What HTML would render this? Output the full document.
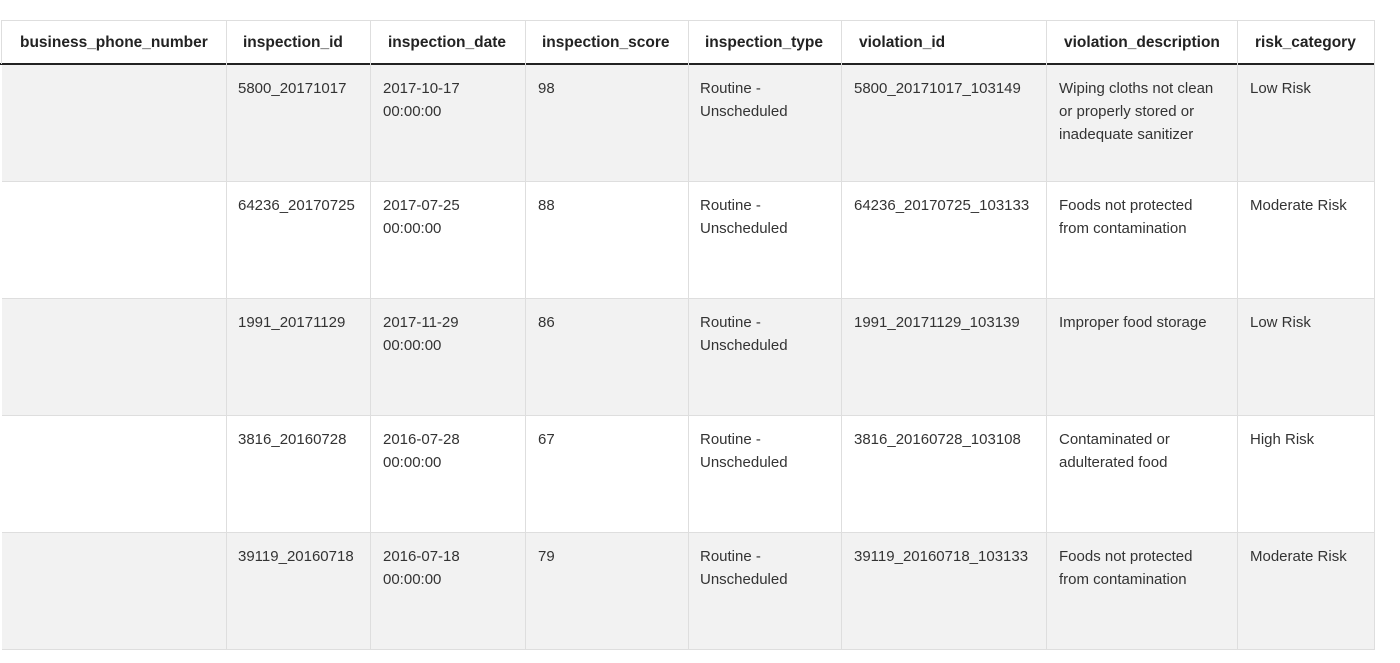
<!DOCTYPE html><html><head><style>
body{margin:0;width:1400px;height:663px;background:#fff;font-family:"Liberation Sans",Arial,sans-serif;overflow:hidden;position:relative}
.c{position:absolute;box-sizing:border-box;padding:12px 12px;font-size:15px;line-height:23px;color:#333;white-space:nowrap}
.h{font-weight:bold;color:#222;font-size:15.5px;padding-top:11px}
.vl{position:absolute;width:1px;background:#dedede}
.hl{position:absolute;height:1px;background:#dedede;left:2px;width:1373px}
.g{position:absolute;left:2px;width:1372px;height:117px;background:#f2f2f2}
</style></head><body>
<div class="hl" style="top:20px"></div>
<div class="g" style="top:65px"></div>
<div class="g" style="top:299px"></div>
<div class="g" style="top:533px"></div>
<div class="hl" style="top:181px"></div>
<div class="hl" style="top:298px"></div>
<div class="hl" style="top:415px"></div>
<div class="hl" style="top:532px"></div>
<div class="hl" style="top:649px"></div>
<div style="position:absolute;left:0;top:63px;width:1375px;height:2px;background:#222"></div>
<div class="vl" style="left:1px;top:20px;height:44px"></div>
<div class="vl" style="left:226px;top:20px;height:630px"></div>
<div class="vl" style="left:370px;top:20px;height:630px"></div>
<div class="vl" style="left:525px;top:20px;height:630px"></div>
<div class="vl" style="left:688px;top:20px;height:630px"></div>
<div class="vl" style="left:841px;top:20px;height:630px"></div>
<div class="vl" style="left:1046px;top:20px;height:630px"></div>
<div class="vl" style="left:1237px;top:20px;height:630px"></div>
<div class="vl" style="left:1374px;top:20px;height:630px"></div>

<div class="c h" style="left:8px;top:20px">business_phone_number</div>
<div class="c h" style="left:231px;top:20px">inspection_id</div>
<div class="c h" style="left:376px;top:20px">inspection_date</div>
<div class="c h" style="left:530px;top:20px">inspection_score</div>
<div class="c h" style="left:693px;top:20px">inspection_type</div>
<div class="c h" style="left:847px;top:20px">violation_id</div>
<div class="c h" style="left:1052px;top:20px">violation_description</div>
<div class="c h" style="left:1243px;top:20px">risk_category</div>

<div style="position:absolute;top:64px;left:0">
<div class="c" style="left:226px;top:1px">5800_20171017</div>
<div class="c" style="left:371px;top:1px">2017-10-17<br>00:00:00</div>
<div class="c" style="left:526px;top:1px">98</div>
<div class="c" style="left:688px;top:1px">Routine -<br>Unscheduled</div>
<div class="c" style="left:842px;top:1px">5800_20171017_103149</div>
<div class="c" style="left:1047px;top:1px">Wiping cloths not clean<br>or properly stored or<br>inadequate sanitizer</div>
<div class="c" style="left:1238px;top:1px">Low Risk</div>
</div>
<div style="position:absolute;top:181px;left:0">
<div class="c" style="left:226px;top:1px">64236_20170725</div>
<div class="c" style="left:371px;top:1px">2017-07-25<br>00:00:00</div>
<div class="c" style="left:526px;top:1px">88</div>
<div class="c" style="left:688px;top:1px">Routine -<br>Unscheduled</div>
<div class="c" style="left:842px;top:1px">64236_20170725_103133</div>
<div class="c" style="left:1047px;top:1px">Foods not protected<br>from contamination</div>
<div class="c" style="left:1238px;top:1px">Moderate Risk</div>
</div>
<div style="position:absolute;top:298px;left:0">
<div class="c" style="left:226px;top:1px">1991_20171129</div>
<div class="c" style="left:371px;top:1px">2017-11-29<br>00:00:00</div>
<div class="c" style="left:526px;top:1px">86</div>
<div class="c" style="left:688px;top:1px">Routine -<br>Unscheduled</div>
<div class="c" style="left:842px;top:1px">1991_20171129_103139</div>
<div class="c" style="left:1047px;top:1px">Improper food storage</div>
<div class="c" style="left:1238px;top:1px">Low Risk</div>
</div>
<div style="position:absolute;top:415px;left:0">
<div class="c" style="left:226px;top:1px">3816_20160728</div>
<div class="c" style="left:371px;top:1px">2016-07-28<br>00:00:00</div>
<div class="c" style="left:526px;top:1px">67</div>
<div class="c" style="left:688px;top:1px">Routine -<br>Unscheduled</div>
<div class="c" style="left:842px;top:1px">3816_20160728_103108</div>
<div class="c" style="left:1047px;top:1px">Contaminated or<br>adulterated food</div>
<div class="c" style="left:1238px;top:1px">High Risk</div>
</div>
<div style="position:absolute;top:532px;left:0">
<div class="c" style="left:226px;top:1px">39119_20160718</div>
<div class="c" style="left:371px;top:1px">2016-07-18<br>00:00:00</div>
<div class="c" style="left:526px;top:1px">79</div>
<div class="c" style="left:688px;top:1px">Routine -<br>Unscheduled</div>
<div class="c" style="left:842px;top:1px">39119_20160718_103133</div>
<div class="c" style="left:1047px;top:1px">Foods not protected<br>from contamination</div>
<div class="c" style="left:1238px;top:1px">Moderate Risk</div>
</div>
</body></html>
